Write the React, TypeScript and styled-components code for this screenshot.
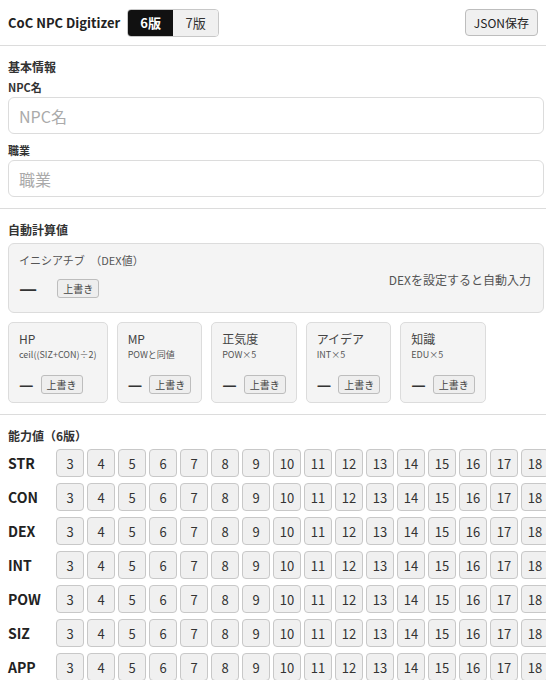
import React, { useState } from "react";
import styled, { createGlobalStyle } from "styled-components";

const GlobalStyle = createGlobalStyle`
  html, body {
    margin: 0;
    padding: 0;
    overflow: hidden;
    background: #fff;
  }
  body {
    font-family: "Noto Sans CJK JP", "Noto Sans", sans-serif;
    color: #222;
  }
  * {
    box-sizing: border-box;
  }
`;

function range(from: number, to: number) {
  const out: number[] = [];
  for (let i = from; i <= to; i++) out.push(i);
  return out;
}

const STATS = ["STR", "CON", "DEX", "INT", "POW", "SIZ", "APP"].map((key) => ({
  key,
  values: range(3, 18)
}));

const DERIVED = [
  { title: "HP", formula: "ceil((SIZ+CON)÷2)" },
  { title: "MP", formula: "POWと同値" },
  { title: "正気度", formula: "POW×5" },
  { title: "アイデア", formula: "INT×5" },
  { title: "知識", formula: "EDU×5" }
];

export default function App() {
  const [edition, setEdition] = useState<6 | 7>(6);

  return (
    <>
      <GlobalStyle />
      <Header>
        <Title>CoC NPC Digitizer</Title>
        <Segment>
          <SegButton $active={edition === 6} onClick={() => setEdition(6)}>
            6版
          </SegButton>
          <SegButton $active={edition === 7} onClick={() => setEdition(7)}>
            7版
          </SegButton>
        </Segment>
        <SaveButton>JSON保存</SaveButton>
      </Header>

      <Section>
        <SectionTitle>基本情報</SectionTitle>
        <Field>
          <Label>NPC名</Label>
          <Input placeholder="NPC名" />
        </Field>
        <Field>
          <Label>職業</Label>
          <Input placeholder="職業" />
        </Field>
      </Section>

      <Section>
        <SectionTitle>自動計算値</SectionTitle>
        <InitBox>
          <InitLeft>
            <BoxTitle>イニシアチブ　（DEX値）</BoxTitle>
            <ValueRow $wide>
              <Dash $big>—</Dash>
              <OverrideButton>上書き</OverrideButton>
            </ValueRow>
          </InitLeft>
          <Hint>DEXを設定すると自動入力</Hint>
        </InitBox>
        <Cards>
          {DERIVED.map((d) => (
            <Card key={d.title}>
              <CardTitle>{d.title}</CardTitle>
              <Formula>{d.formula}</Formula>
              <ValueRow>
                <Dash>—</Dash>
                <OverrideButton>上書き</OverrideButton>
              </ValueRow>
            </Card>
          ))}
        </Cards>
      </Section>

      <Section $last>
        <SectionTitle>能力値（6版）</SectionTitle>
        <StatList>
          {STATS.map((s) => (
            <StatRow key={s.key}>
              <StatLabel>{s.key}</StatLabel>
              {s.values.map((v) => (
                <StatButton key={v}>{v}</StatButton>
              ))}
            </StatRow>
          ))}
        </StatList>
      </Section>
    </>
  );
}

const Header = styled.header`
  display: flex;
  align-items: center;
  height: 46px;
  padding: 0 8px;
  border-bottom: 1px solid #dcdcdc;
`;

const Title = styled.h1`
  margin: 0 7px 0 0;
  font-size: 13px;
  font-weight: 700;
  color: #222;
`;

const Segment = styled.div`
  display: flex;
  height: 28px;
  border: 1px solid #c8c8c8;
  border-radius: 4px;
  overflow: hidden;
`;

const SegButton = styled.button<{ $active?: boolean }>`
  width: 45px;
  border: none;
  font-family: inherit;
  font-size: 13px;
  font-weight: ${(p) => (p.$active ? 700 : 400)};
  color: ${(p) => (p.$active ? "#fff" : "#333")};
  background: ${(p) => (p.$active ? "#111" : "#f0f0f0")};
  padding: 0;
  cursor: pointer;
`;

const SaveButton = styled.button`
  margin-left: auto;
  height: 27px;
  padding: 0 8px;
  border: 1px solid #bdbdbd;
  border-radius: 4px;
  background: #f0f0f0;
  font-family: inherit;
  font-size: 12px;
  color: #222;
`;

const Section = styled.section<{ $last?: boolean }>`
  padding: 12px 2px 11px 8px;
  border-bottom: ${(p) => (p.$last ? "none" : "1px solid #dcdcdc")};
`;

const SectionTitle = styled.h2`
  margin: 0 0 5px;
  font-size: 12px;
  line-height: 17px;
  font-weight: 700;
  color: #333;
`;

const Field = styled.div`
  display: flex;
  flex-direction: column;
  gap: 3px;
  & + & {
    margin-top: 9px;
  }
`;

const Label = styled.label`
  font-size: 11px;
  line-height: 14px;
  font-weight: 700;
  color: #333;
`;

const Input = styled.input`
  height: 37px;
  width: 100%;
  padding: 0 10px;
  border: 1px solid #dcdcdc;
  border-radius: 6px;
  font-family: inherit;
  font-size: 16px;
  color: #222;
  &::placeholder {
    color: #aaa;
  }
`;

const InitBox = styled.div`
  display: flex;
  align-items: center;
  justify-content: space-between;
  height: 70px;
  padding: 8px 12px 14px 10px;
  background: #f4f4f4;
  border: 1px solid #dcdcdc;
  border-radius: 6px;
`;

const InitLeft = styled.div`
  display: flex;
  flex-direction: column;
  gap: 10px;
`;

const BoxTitle = styled.div`
  font-size: 11px;
  line-height: 16px;
  color: #555;
`;

const Hint = styled.div`
  font-size: 12px;
  color: #555;
  margin-top: 8px;
`;

const ValueRow = styled.div<{ $wide?: boolean }>`
  display: flex;
  align-items: center;
  gap: ${(p) => (p.$wide ? "20px" : "7px")};
`;

const Dash = styled.span<{ $big?: boolean }>`
  font-size: ${(p) => (p.$big ? "20px" : "16px")};
  line-height: 20px;
  font-weight: 700;
  color: #333;
`;

const OverrideButton = styled.button`
  height: 19px;
  padding: 0 5px;
  border: 1px solid #bdbdbd;
  border-radius: 3px;
  background: #eee;
  font-family: inherit;
  font-size: 10px;
  line-height: 17px;
  color: #444;
`;

const Cards = styled.div`
  display: flex;
  gap: 9px;
  margin-top: 9px;
`;

const Card = styled.div`
  min-width: 85px;
  padding: 7px 10px 8px;
  background: #f4f4f4;
  border: 1px solid #dcdcdc;
  border-radius: 5px;
  display: flex;
  flex-direction: column;
`;

const CardTitle = styled.div`
  font-size: 12px;
  line-height: 18px;
  color: #444;
`;

const Formula = styled.div`
  font-size: 9px;
  line-height: 14px;
  color: #555;
  margin-bottom: 12px;
  white-space: nowrap;
`;

const StatList = styled.div`
  display: flex;
  flex-direction: column;
  gap: 6px;
`;

const StatRow = styled.div`
  display: flex;
  align-items: center;
  gap: 3px;
`;

const StatLabel = styled.div`
  width: 45px;
  flex-shrink: 0;
  font-size: 14px;
  font-weight: 700;
  color: #222;
`;

const StatButton = styled.button`
  flex-shrink: 0;
  width: 28px;
  height: 28px;
  padding: 0;
  border: 1px solid #c8c8c8;
  border-radius: 4px;
  background: #f0f0f0;
  font-family: inherit;
  font-size: 13px;
  color: #333;
`;
